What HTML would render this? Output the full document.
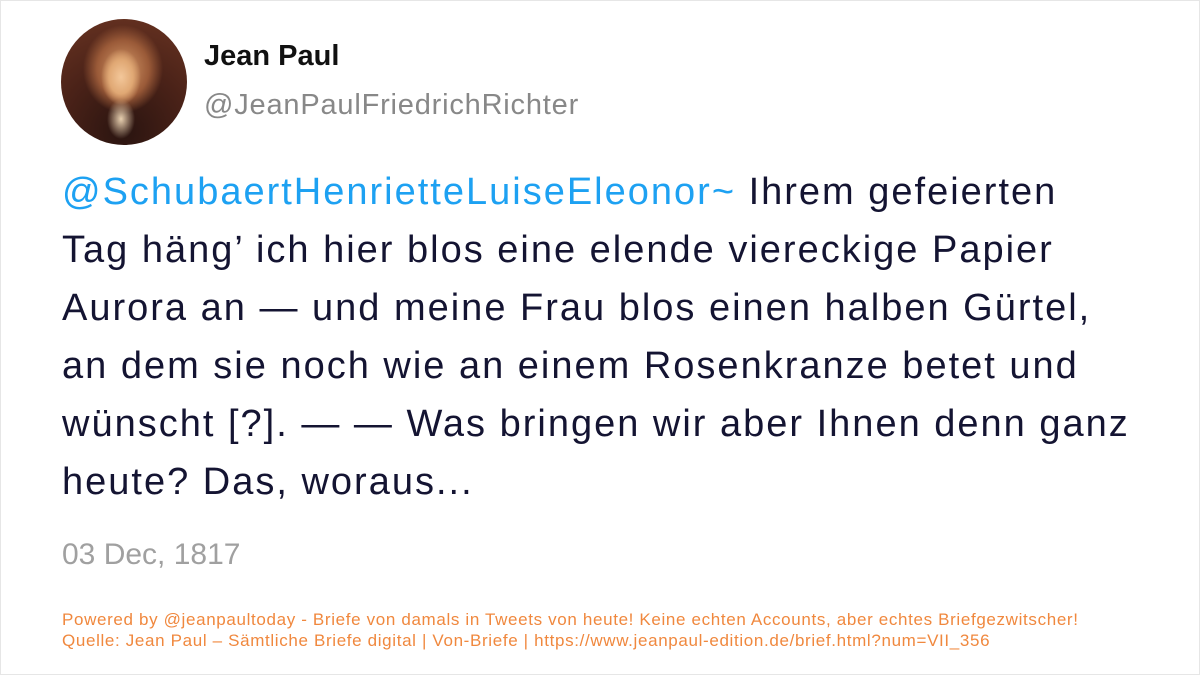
<!DOCTYPE html>
<html><head><meta charset="utf-8"><style>
html,body{margin:0;padding:0;background:#fff;}
body{width:1200px;height:675px;position:relative;overflow:hidden;font-family:"Liberation Sans",sans-serif;}
.frame{position:absolute;left:0;top:0;width:1198px;height:673px;border:1px solid #e6e6e6;}
.av{position:absolute;left:61px;top:19px;width:126px;height:126px;border-radius:50%;
background:radial-gradient(ellipse 20px 28px at 60px 58px,#f3c79a 0%,#e0a874 60%,transparent 100%),
radial-gradient(ellipse 14px 20px at 60px 100px,#e8d0b0 0%,transparent 100%),
radial-gradient(ellipse 40px 44px at 62px 50px,#d59a6a 0%,#9a5a38 65%,transparent 100%),
radial-gradient(circle at 50% 90%,#2a1410 0%,#4a2218 50%,#6a3422 100%);}
.name{position:absolute;left:204px;top:40px;font-size:29px;font-weight:bold;color:#111;}
.handle{position:absolute;left:204px;top:89px;font-size:29px;letter-spacing:0.8px;color:#888;}
.l{position:absolute;left:62px;font-size:38px;letter-spacing:2px;color:#141432;white-space:nowrap;}
.m{color:#1da1f2;}
.date{position:absolute;left:62px;top:538px;font-size:30px;color:#a0a0a0;}
.f{position:absolute;left:62px;font-size:17px;letter-spacing:0.65px;color:#f0883e;white-space:nowrap;}
</style></head><body>
<div class="frame"></div>
<div class="av"></div>
<div class="name">Jean Paul</div>
<div class="handle">@JeanPaulFriedrichRichter</div>
<div class="l" style="top:171px"><span class="m">@SchubaertHenrietteLuiseEleonor~</span> Ihrem gefeierten</div>
<div class="l" style="top:229px">Tag häng’ ich hier blos eine elende viereckige Papier</div>
<div class="l" style="top:287px">Aurora an — und meine Frau blos einen halben Gürtel,</div>
<div class="l" style="top:345px">an dem sie noch wie an einem Rosenkranze betet und</div>
<div class="l" style="top:403px">wünscht [?]. — — Was bringen wir aber Ihnen denn ganz</div>
<div class="l" style="top:461px">heute? Das, woraus...</div>
<div class="date">03 Dec, 1817</div>
<div class="f" style="top:610px">Powered by @jeanpaultoday - Briefe von damals in Tweets von heute! Keine echten Accounts, aber echtes Briefgezwitscher!</div>
<div class="f" style="top:631px">Quelle: Jean Paul – Sämtliche Briefe digital | Von-Briefe | https://www.jeanpaul-edition.de/brief.html?num=VII_356</div>
</body></html>
